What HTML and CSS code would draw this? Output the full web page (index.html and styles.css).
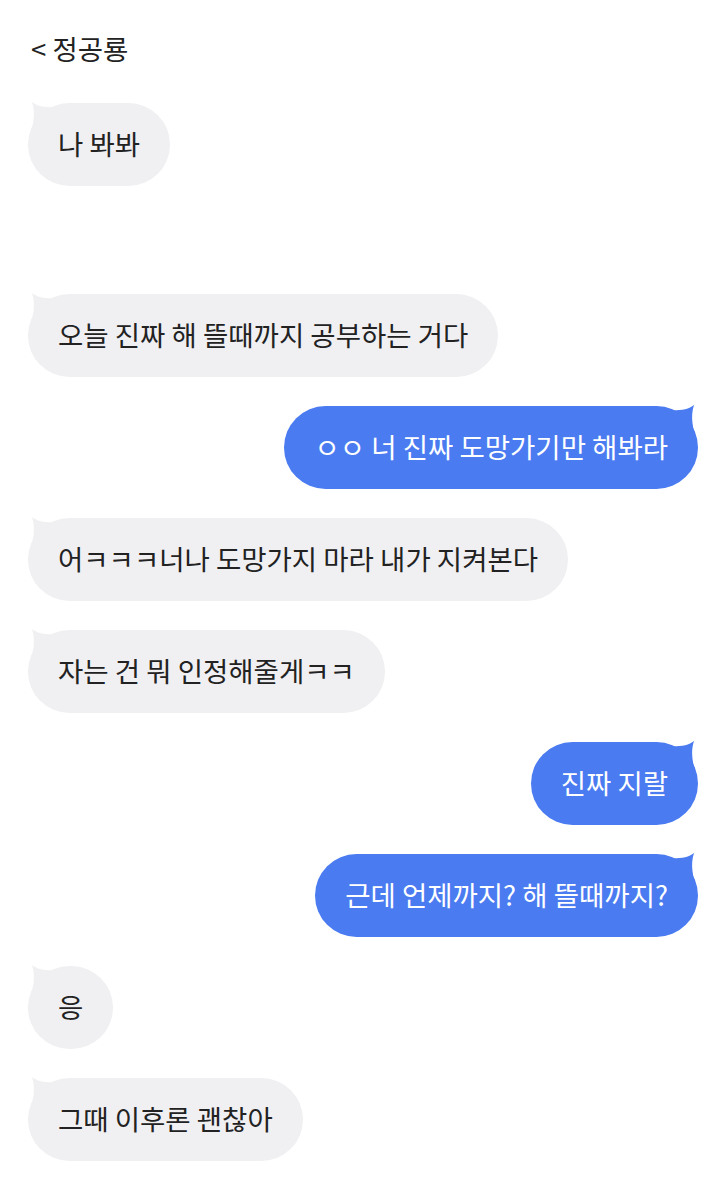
FILE: index.html
```html
<!DOCTYPE html>
<html>
<head>
  <meta charset="utf-8">
  <link rel="stylesheet" href="styles.css">
</head>
<body>
  <div class="header">&lt; 정공룡</div>
  <div class="chat">
    <div class="bubble them">나 봐봐</div>
    <div class="bubble them later">오늘 진짜 해 뜰때까지 공부하는 거다</div>
    <div class="bubble me">ㅇㅇ 너 진짜 도망가기만 해봐라</div>
    <div class="bubble them">어ㅋㅋㅋ너나 도망가지 마라 내가 지켜본다</div>
    <div class="bubble them">자는 건 뭐 인정해줄게ㅋㅋ</div>
    <div class="bubble me">진짜 지랄</div>
    <div class="bubble me">근데 언제까지? 해 뜰때까지?</div>
    <div class="bubble them">응</div>
    <div class="bubble them">그때 이후론 괜찮아</div>
  </div>
</body>
</html>
```

FILE: styles.css
```css
body {
  margin: 0;
  background: #ffffff;
  font-family: "Noto Sans CJK KR", "Noto Sans", sans-serif;
  color: #222222;
}
.header {
  padding: 33px 0 0 31px;
  font-size: 27.5px;
  line-height: 30px;
  height: 30px;
}
.chat {
  display: flex;
  flex-direction: column;
  gap: 29px;
  padding: 40px 30px 40px 28px;
}
.bubble {
  position: relative;
  isolation: isolate;
  height: 83px;
  line-height: 81px;
  padding: 0 30px;
  font-size: 27.5px;
  border-radius: 42px;
  white-space: nowrap;
}
/* little horn at the top corner */
.bubble::before {
  content: "";
  position: absolute;
  z-index: -1;
  top: -1px;
  width: 34px;
  height: 36px;
  background: inherit;
  clip-path: path('M4 0 C10 5 20 6 34 5 L34 36 L1 36 C5 24 8 12 4 0 Z');
}
.them {
  align-self: flex-start;
  background: #f0f0f3;
}
.them::before {
  left: 0;
}
.me {
  align-self: flex-end;
  background: #4a7bf1;
  color: #ffffff;
}
.me::before {
  right: 0;
  transform: scaleX(-1);
}
.later {
  margin-top: 79px;
}
```
